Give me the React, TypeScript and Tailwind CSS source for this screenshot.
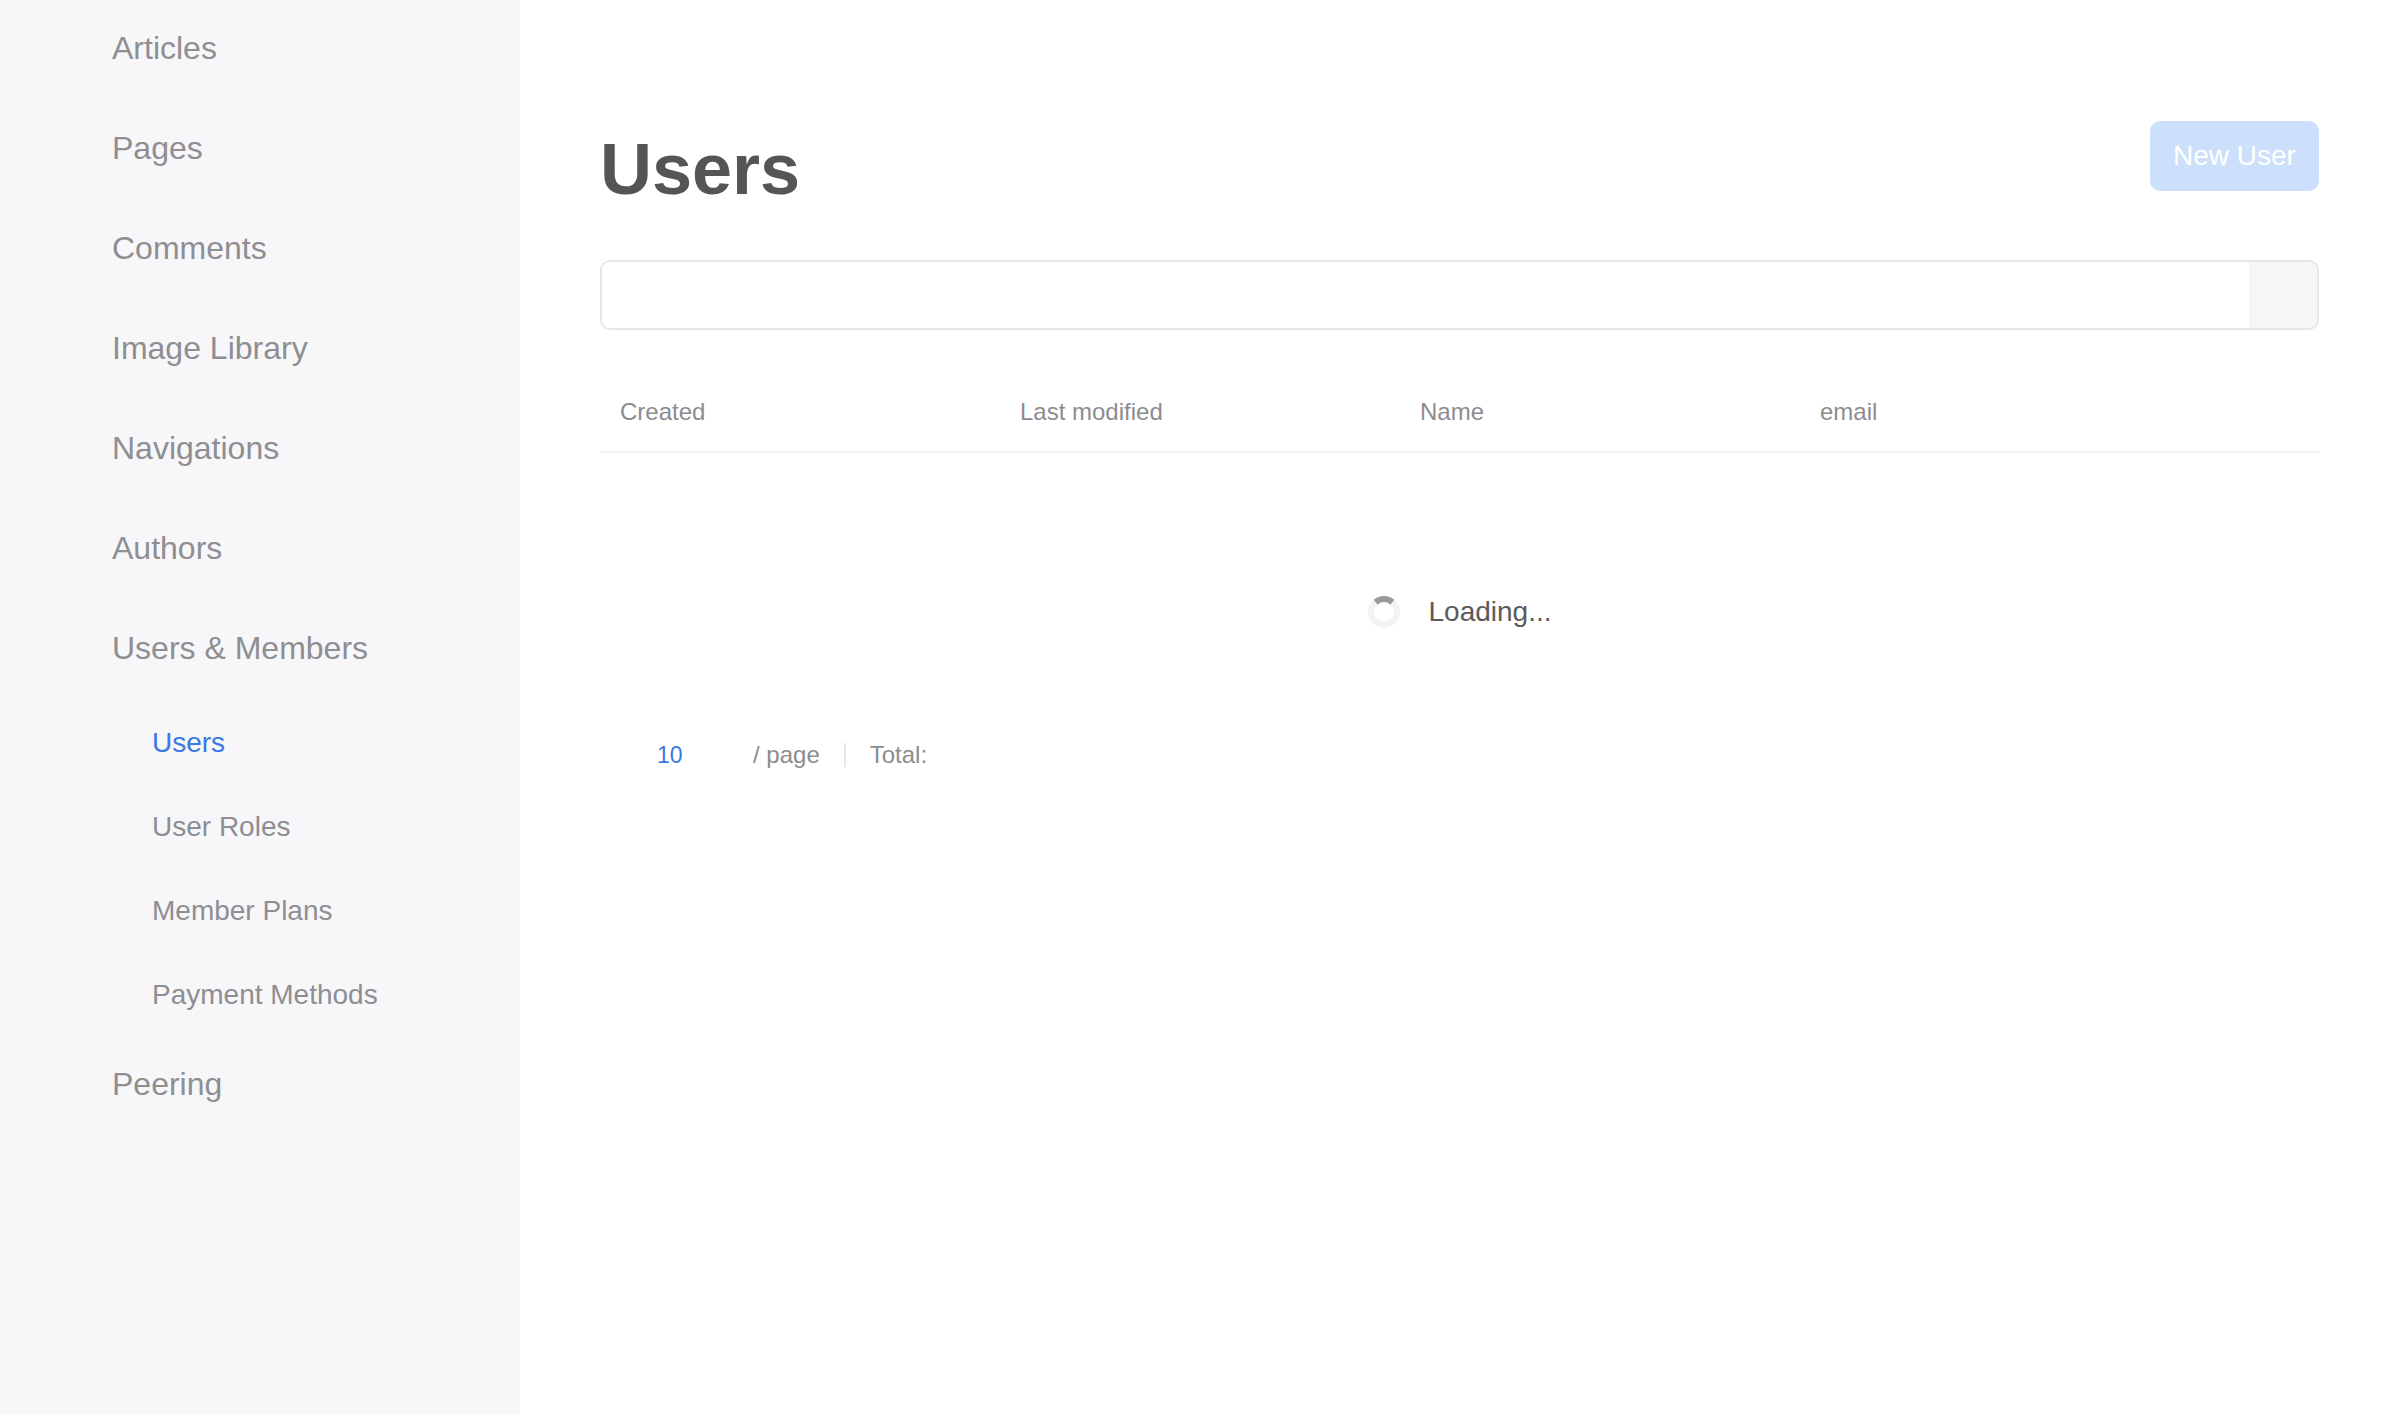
import React from 'react';

interface NavItem {
  label: string;
  active?: boolean;
  children?: NavItem[];
}

const nav: NavItem[] = [
  { label: 'Articles' },
  { label: 'Pages' },
  { label: 'Comments' },
  { label: 'Image Library' },
  { label: 'Navigations' },
  { label: 'Authors' },
  {
    label: 'Users & Members',
    children: [
      { label: 'Users', active: true },
      { label: 'User Roles' },
      { label: 'Member Plans' },
      { label: 'Payment Methods' },
    ],
  },
  { label: 'Peering' },
];

const columns = ['Created', 'Last modified', 'Name', 'email'];

const Spinner = () => (
  <svg width="32" height="32" viewBox="0 0 32 32" className="shrink-0">
    <circle cx="16" cy="16" r="13" fill="none" stroke="#f3f3f5" strokeWidth="6" />
    <path d="M7.6 6.1 A13 13 0 0 1 24.4 6.1" fill="none" stroke="#9a9a9a" strokeWidth="6" />
  </svg>
);

const Sidebar = () => (
  <aside className="w-[520px] shrink-0 bg-[#f7f7f9] min-h-[1414px]">
    <ul className="-mt-[2px]">
      {nav.map((item) => (
        <li key={item.label}>
          <div className="h-[100px] flex items-center pl-[112px] text-[32px] text-[#8e8e93]">
            {item.label}
          </div>
          {item.children && (
            <ul className="pt-[3px] -mb-[3px]">
              {item.children.map((child) => (
                <li
                  key={child.label}
                  className={`h-[84px] flex items-center pl-[152px] text-[28px] ${
                    child.active ? 'text-[#3a78e3]' : 'text-[#8e8e93]'
                  }`}
                >
                  {child.label}
                </li>
              ))}
            </ul>
          )}
        </li>
      ))}
    </ul>
  </aside>
);

export default function App() {
  return (
    <div className="flex min-h-[1414px] bg-white font-['Liberation_Sans',Arial,sans-serif]">
      <Sidebar />
      <main className="flex-1 pl-[80px] pr-[81px] pt-[121px]">
        <div className="flex justify-between items-start">
          <h1 className="mt-[12px] text-[72px] leading-none font-bold text-[#555555]">Users</h1>
          <button className="h-[70px] w-[169px] rounded-[10px] bg-[#cde0fb] text-white text-[28px]">
            New User
          </button>
        </div>

        <div className="mt-[55px] flex h-[70px] border-2 border-[#e6e6ea] rounded-[10px] overflow-hidden">
          <input className="flex-1 outline-none px-5 text-[24px] bg-white" />
          <div className="w-[68px] bg-[#f6f6f8]" />
        </div>

        <div className="mt-[43px] h-[80px] grid grid-cols-[400px_400px_400px_1fr] items-center border-b-2 border-[#f1f1f3] text-[24px] text-[#8c8c90]">
          {columns.map((c) => (
            <div key={c} className="pl-[20px]">
              {c}
            </div>
          ))}
        </div>

        <div className="pt-[138px] flex items-center justify-center gap-[29px]">
          <Spinner />
          <span className="text-[28px] text-[#5a5a5a]">Loading...</span>
        </div>

        <div className="mt-[102px] h-[40px] flex items-center pl-[57px] text-[24px] text-[#8c8c90]">
          <span className="w-[96px] text-[#3a78e3] text-[23px]">10</span>
          <span>/ page</span>
          <span className="mx-[24px] h-[24px] w-[2px] bg-[#e8e8ea]" />
          <span>Total:</span>
        </div>
      </main>
    </div>
  );
}
